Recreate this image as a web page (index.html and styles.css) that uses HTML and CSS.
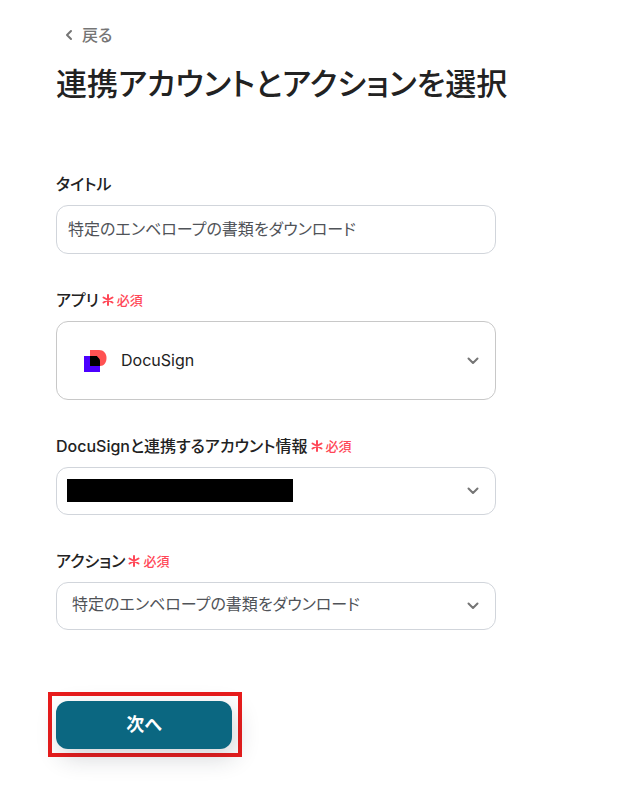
FILE: index.html
```html
<!DOCTYPE html>
<html lang="ja">
<head>
    <meta charset="UTF-8">
    <meta name="viewport" content="width=device-width, initial-scale=1">
    <title>連携アカウントとアクションを選択</title>
    <link rel="stylesheet" href="styles.css">
</head>
<body>
    <main class="page">
        <a class="back" href="#">
            <svg class="back-icon" viewBox="0 0 10 14"><path d="M7 3 3 7l4 4"/></svg>
            戻る
        </a>
        <h1>連携アカウントとアクションを選択</h1>

        <form class="form">
            <div class="field">
                <div class="label-row">
                    <label for="title">タイトル</label>
                </div>
                <input class="control" id="title" type="text" value="特定のエンベロープの書類をダウンロード">
            </div>

            <div class="field">
                <div class="label-row">
                    <label for="app">アプリ</label>
                    <span class="required"><svg viewBox="0 0 12 12"><path d="M6 1v10M1.500 3.500l9 5M10.500 3.500l-9 5"/></svg>必須</span>
                </div>
                <div class="select-box">
                    <select class="control control-app" id="app">
                        <option>DocuSign</option>
                    </select>
                    <svg class="app-logo" viewBox="0 0 24 24">
                        <rect x="1" y="7" width="16" height="16" fill="#4c00ff"/>
                        <path d="M7 1h9c4.500 0 7.500 3.500 7.500 8s-2.500 8-6.500 8H7z" fill="#ff5252"/>
                        <path d="M7 7h7c1 2 3 2 3 5v5H7z" fill="#000"/>
                    </svg>
                    <svg class="chevron" viewBox="0 0 14 14"><path d="M2.500 4.500 7 9l4.500-4.500"/></svg>
                </div>
            </div>

            <div class="field">
                <div class="label-row">
                    <label for="account">DocuSignと連携するアカウント情報</label>
                    <span class="required"><svg viewBox="0 0 12 12"><path d="M6 1v10M1.500 3.500l9 5M10.500 3.500l-9 5"/></svg>必須</span>
                </div>
                <div class="select-box">
                    <select class="control control-select" id="account">
                        <option></option>
                    </select>
                    <span class="mask"></span>
                    <svg class="chevron" viewBox="0 0 14 14"><path d="M2.500 4.500 7 9l4.500-4.500"/></svg>
                </div>
            </div>

            <div class="field">
                <div class="label-row">
                    <label for="action">アクション</label>
                    <span class="required"><svg viewBox="0 0 12 12"><path d="M6 1v10M1.500 3.500l9 5M10.500 3.500l-9 5"/></svg>必須</span>
                </div>
                <div class="select-box">
                    <select class="control control-select" id="action">
                        <option>特定のエンベロープの書類をダウンロード</option>
                    </select>
                    <svg class="chevron" viewBox="0 0 14 14"><path d="M2.500 4.500 7 9l4.500-4.500"/></svg>
                </div>
            </div>

            <div class="highlight">
                <button class="next" type="button">次へ</button>
            </div>
        </form>
    </main>
</body>
</html>
```

FILE: styles.css
```css
* {
    box-sizing: border-box;
}

body {
    margin: 0;
    background: #fff;
    color: #222;
    font-family: Inter, "Noto Sans CJK JP", sans-serif;
    font-size: 16px;
    line-height: 24px;
    font-feature-settings: "palt";
}

.page {
    padding: 23px 56px 40px;
}

.back {
    display: inline-flex;
    align-items: center;
    gap: 8px;
    padding-left: 8px;
    color: #757575;
    font-weight: 500;
    text-decoration: none;
}

.back-icon {
    width: 10px;
    height: 14px;
}

svg path {
    stroke-linecap: round;
    stroke-linejoin: round;
}

.back-icon path,
.chevron path {
    fill: none;
    stroke: #757575;
    stroke-width: 2;
}

h1 {
    margin: 12px 0 64px;
    font-size: 31px;
    font-weight: 500;
    line-height: 48px;
}

.form {
    max-width: 440px;
}

.field {
    margin-bottom: 34px;
}

.label-row {
    display: flex;
    align-items: center;
    gap: 3px;
    margin-bottom: 9px;
}

.label-row label {
    font-weight: 500;
}

.required {
    display: flex;
    align-items: center;
    gap: 3px;
    color: #ff4757;
    font-size: 13px;
    font-weight: 500;
}

.required svg {
    width: 12px;
    height: 12px;
}

.required path {
    stroke: #ff4757;
    stroke-width: 2;
}

.control {
    display: block;
    width: 100%;
    height: 49px;
    padding: 0 11px 4px;
    border: 1px solid #d1d5db;
    border-radius: 12px;
    background: #fff;
    color: #505358;
    font: inherit;
    font-feature-settings: inherit;
    appearance: none;
}

.select-box {
    position: relative;
}

.control-select {
    height: 48px;
    padding-left: 15px;
    padding-right: 40px;
}

.control-app {
    height: 79px;
    padding: 0 40px 2px 64px;
    border-color: #c8c8c8;
    color: #222;
}

.app-logo {
    position: absolute;
    top: 50%;
    left: 27px;
    width: 24px;
    height: 24px;
    margin-top: -12px;
}

.chevron {
    position: absolute;
    top: 50%;
    right: 16px;
    width: 14px;
    height: 14px;
    margin-top: -7px;
    pointer-events: none;
}

.mask {
    position: absolute;
    top: 12px;
    left: 11px;
    width: 226px;
    height: 23px;
    background: #000;
}

.highlight {
    width: 194px;
    margin: 62px 0 0 -8px;
    padding: 5px 6px 4px 4px;
    border: 4px solid #e81c1c;
}

.next {
    display: block;
    width: 100%;
    height: 48px;
    padding: 0;
    border: 0;
    border-radius: 12px;
    background: #0b6781;
    box-shadow: 4px 8px 24px rgba(31, 41, 55, 0.2);
    color: #fff;
    font: inherit;
    font-size: 18px;
    font-weight: 700;
}
```
